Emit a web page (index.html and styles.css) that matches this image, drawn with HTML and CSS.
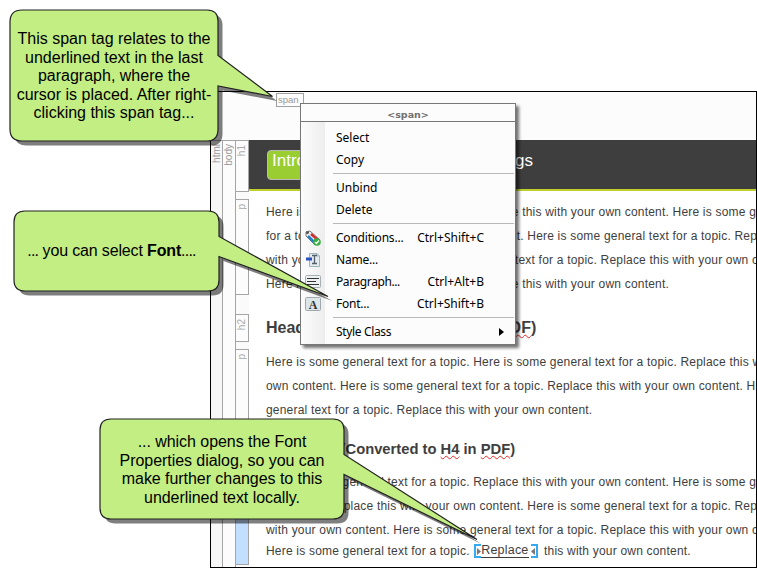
FILE: index.html
```html
<!DOCTYPE html>
<html lang="en">
<head>
<meta charset="utf-8">
<title>Span tag font menu</title>
<link rel="stylesheet" href="styles.css">
</head>
<body>
<main class="stage">
  <section class="editor">
    <div class="tagbar"><span class="tag">span</span></div>
    <div class="workspace">
      <div class="gutter"><span>html</span></div>
      <div class="gutter body-gutter"><span>body</span></div>
      <div class="blocks">
        <div class="block b-h1"><span>h1</span></div>
        <div class="block b-p1"><span>p</span></div>
        <div class="block b-h2"><span>h2</span></div>
        <div class="block b-p2"><span>p</span></div>
        <div class="block b-h3"></div>
        <div class="block b-p3"></div>
      </div>
      <article class="page">
        <header class="banner"><h1><span class="chip">Intro</span><span class="rest">gs</span></h1></header>
        <div class="para p1">
          <div>Here is some general text for a topic. Replace this with your own content. Here is some g</div>
          <div>for a topic. Replace this with your own content. Here is some general text for a topic. Rep</div>
          <div>with your own content. Here is some general text for a topic. Replace this with your own c</div>
          <div>Here is some general text for a topic. Replace this with your own content.</div>
        </div>
        <h2>Heading 2 (Converted to <u>H3</u> in <u>PDF</u>)</h2>
        <div class="para p2">
          <div>Here is some general text for a topic. Here is some general text for a topic. Replace this w</div>
          <div>own content. Here is some general text for a topic. Replace this with your own content. H</div>
          <div>general text for a topic. Replace this with your own content.</div>
        </div>
        <h3>Heading 3 (Converted to <u>H4</u> in <u>PDF</u>)</h3>
        <div class="para p3">
          <div>Here is some general text for a topic. Replace this with your own content. Here is some g</div>
          <div>for a topic. Replace this with your own content. Here is some general text for a topic. Rep</div>
          <div>with your own content. Here is some general text for a topic. Replace this with your own c</div>
          <div class="last">Here is some general text for a topic. <span class="marked"><svg width="7" height="14" viewBox="0 0 7 14"><path d="M7 1H1V13H7" fill="none" stroke="#35aaf0" stroke-width="2"/><path d="M3 4L7 7.500L3 11Z" fill="#777"/></svg><span class="replace">Replace</span><svg class="end" width="7" height="14" viewBox="0 0 7 14"><path d="M0 1H6V13H0" fill="none" stroke="#35aaf0" stroke-width="2"/><path d="M4 4L0 7.500L4 11Z" fill="#777"/></svg></span> this with your own content.</div>
        </div>
      </article>
    </div>
  </section>

  <nav class="menu">
    <div class="menu-title">&lt;span&gt;</div>
    <div class="menu-body">
      <div class="item"><i></i><span>Select</span></div>
      <div class="item"><i></i><span>Copy</span></div>
      <hr>
      <div class="item"><i></i><span>Unbind</span></div>
      <div class="item"><i></i><span>Delete</span></div>
      <hr>
      <div class="item"><i><svg width="16" height="16" viewBox="0 0 16 16"><path d="M1 2L5 1L15 10L10 15L1 6Z" fill="#eee" stroke="#777"/><path d="M6 4L13 10" stroke="#d52b2b" stroke-width="2.500"/><path d="M3 6L9 12" stroke="#277fc7" stroke-width="2.500"/><circle cx="2.500" cy="2.500" r="1.500" fill="#555"/><circle cx="12" cy="12" r="3.800" fill="#36ae42"/><path d="M10 12L11.500 13.500L14 10.500" fill="none" stroke="#fff" stroke-width="1.300"/></svg></i><span class="tight">Conditions...</span><kbd>Ctrl+Shift+C</kbd></div>
      <div class="item"><i><svg width="16" height="16" viewBox="0 0 16 16"><path d="M4.500 1.500H12L14.500 4V14.500H4.500Z" fill="#e3edf0" stroke="#9fb5bc"/><path d="M12 1.500V4H14.500" fill="none" stroke="#9fb5bc"/><path d="M1 7H7" stroke="#2850c0" stroke-width="3"/><path d="M7 3.500H12M7 11.500H12M9.500 3.500V11.500" stroke="#555f68" stroke-width="1.300"/></svg></i><span class="tight">Name...</span></div>
      <div class="item"><i><svg width="16" height="16" viewBox="0 0 16 16"><rect x=".5" y="1.500" width="15" height="12" rx="1" fill="#eef1f2" stroke="#a6afb2"/><path d="M2 4.500H14M2 7.500H11M2 10.500H14" stroke="#333"/></svg></i><span class="tighter">Paragraph...</span><kbd>Ctrl+Alt+B</kbd></div>
      <div class="item"><i><svg width="16" height="16" viewBox="0 0 16 16"><rect x=".5" y="1.500" width="15" height="13" rx="1" fill="#dce5e8" stroke="#9eaaae"/><text class="glyph" x="8" y="12.500" text-anchor="middle">A</text></svg></i><span class="tight">Font...</span><kbd>Ctrl+Shift+B</kbd></div>
      <hr>
      <div class="item"><i></i><span class="tighter">Style Class</span><b class="arrow"></b></div>
    </div>
  </nav>

  <svg class="callouts" width="757" height="568" viewBox="0 0 757 568">
    <defs>
      <path id="c1" d="M22 10H207Q218 10 218 21V55.500L272.500 96.500L218 86V129Q218 141 207 141H22Q10 141 10 129V22Q10 10 22 10Z"/>
      <path id="c2" d="M25 211H208Q219 211 219 222V236.500L328 296.500L219 256.500V280Q219 291 208 291H25Q14 291 14 280V222Q14 211 25 211Z"/>
      <path id="c3" d="M111 419H333Q344 419 344 430V454.500L477 539.500L344 474.500V508Q344 519 333 519H111Q100 519 100 508V430Q100 419 111 419Z"/>
    </defs>
    <g class="shadow"><use href="#c1"/><use href="#c2"/><use href="#c3"/></g>
    <g class="bubble"><use href="#c1"/><use href="#c2"/><use href="#c3"/></g>
  </svg>
  <div class="note n1">
    <div>This span tag relates to the</div><div>underlined text in the last</div><div>paragraph, where the</div><div>cursor is placed. After right-</div><div>clicking this span tag...</div>
  </div>
  <div class="note n2"><div><span class="dots">...</span> you can select <b>Font</b><span class="dots">....</span></div></div>
  <div class="note n3">
    <div>... which opens the Font</div><div>Properties dialog, so you can</div><div>make further changes to this</div><div>underlined text locally.</div>
  </div>
</main>
</body>
</html>
```
FILE: styles.css
```css
* { box-sizing: border-box; }
body { margin: 0; background: #fff; font-family: "Liberation Sans", Arial, sans-serif; }
.stage { position: relative; width: 757px; height: 568px; overflow: hidden; }

.editor { margin: 91px 0 0 210px; width: 547px; height: 477px; border: 1px solid #000; background: #fff; overflow: hidden; }
.tagbar { height: 48px; background: #fcfcfc; padding: 1px 0 0 65px; }
.tag { display: block; width: 28px; height: 14px; border: 1px solid #a0a0a0; color: #999; font-size: 9.500px; line-height: 12px; padding-left: 1px; }
.workspace { display: grid; grid-template-columns: 12px 13px 13px 1fr; height: 427px; }
.gutter { border-right: 1px solid #a5a5a5; border-top: 1px solid #a5a5a5; background: #f7f7f7; color: #999; font-size: 10px; padding-top: 3px; }
.body-gutter { background: #fcfcfc; }
.gutter span, .block span { display: block; writing-mode: vertical-rl; transform: rotate(180deg); line-height: 11px; width: 11px; }
.blocks { background: #fafafa; display: flex; flex-direction: column; }
.block { flex: none; border: 1px solid #a5a5a5; border-left: 0; color: #aaa; font-size: 10px; padding-top: 4px; background: #fcfcfc; }
.b-h1 { height: 52px; }
.b-p1 { height: 96px; margin-top: 7px; }
.b-h2 { height: 28px; margin-top: 19px; }
.b-p2 { height: 74px; margin-top: 7px; }
.b-h3 { height: 25px; margin-top: 15px; }
.b-p3 { height: 98px; margin-top: 4px; background: #c2dfff; }

.page { min-width: 0; overflow: hidden; white-space: nowrap; color: #3e3e3e; }
.banner { height: 51px; background: #3e3e3e; border-bottom: 2px solid #bfd02c; padding: 10px 0 0 18px; }
h1 { margin: 0; display: flex; font: 17px/20px "Liberation Sans", Arial, sans-serif; color: #fff; }
.chip { width: 200px; height: 30px; border-radius: 4px; background: #9acd32; border: 1px solid #b9b9b9; padding-left: 4px; flex: none; }
.rest { margin-left: 48px; padding-top: 1px; }
.para { padding-left: 17px; font-size: 12px; line-height: 24px; letter-spacing: .2px; }
.p1 { padding-top: 9px; }
h2 { margin: 22px 0 0 17px; font-size: 16px; line-height: 20px; }
.p2 { padding-top: 12px; }
h3 { margin: 17px 0 0 17px; font-size: 14.750px; line-height: 20px; }
.p3 { padding-top: 11px; }
h2 u, h3 u { text-decoration: underline wavy #e02a2a 1px; text-underline-offset: 1px; text-decoration-skip-ink: none; }
.last { line-height: 18px; display: flex; white-space: pre; }
.marked { display: flex; align-items: center; height: 18px; margin: 0 3px 0 1px; }
.replace { font-size: 12.500px; line-height: 13px; border-bottom: 1px solid #3e3e3e; }
.end { margin-left: 2px; }

.menu { position: absolute; left: 300px; top: 103px; width: 216px; height: 242px; background: #fcfcfc; border: 1px solid #777; box-shadow: 3px 3px 3px rgba(0,0,0,.55); font: 12px/22px "Noto Sans", "Open Sans", sans-serif; color: #000; }
.menu-title { height: 18px; border-bottom: 1px solid #777; text-align: center; color: #707070; font: bold 9.500px/21px "DejaVu Sans", sans-serif; }
.menu-body { height: 222px; padding-top: 5px; background: linear-gradient(90deg, #fcfcfc 0, #ededed 24px, #fcfcfc 24px); }
.item { height: 22px; display: flex; align-items: center; padding-right: 31px; }
.item i { width: 35px; padding: 2px 0 0 4px; height: 20px; flex: none; }
.item svg { display: block; }
.item kbd { margin-left: auto; font: inherit; }
.tight { letter-spacing: -.22px; }
.tighter { letter-spacing: -.4px; }
.item:last-child .tighter { letter-spacing: -.35px; }
.glyph { font: bold 12px "Liberation Serif", serif; fill: #333; }
hr { margin: 2px 1px 3px 32px; border: 0; border-top: 1px solid #b9b9b9; }
.arrow { margin: 0 -20px 0 auto; border-left: 5px solid #000; border-top: 4px solid transparent; border-bottom: 4px solid transparent; }

.callouts { position: absolute; left: 0; top: 0; }
.shadow { fill: #000; opacity: .5; transform: translate(4.500px, 4.500px); }
.bubble { fill: #c3ee83; stroke: #222; stroke-width: 1.200; }
.note { position: absolute; text-align: center; white-space: nowrap; font-size: 16px; line-height: 18.500px; color: #000; }
.n1 { left: 10px; top: 30px; width: 208px; }
.n2 { left: 9px; top: 242px; width: 205px; letter-spacing: -.15px; }
.dots { letter-spacing: -.8px; }
.n3 { left: 100px; top: 433px; width: 244px; letter-spacing: -.05px; }
```
